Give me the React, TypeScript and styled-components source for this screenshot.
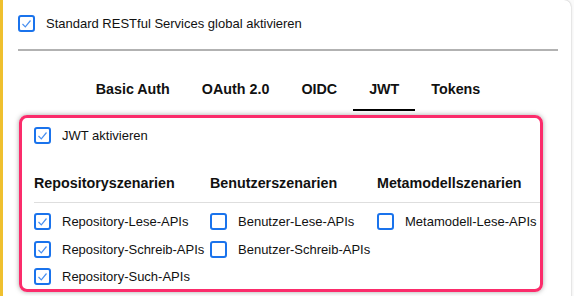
import styled, { createGlobalStyle } from 'styled-components'

const GlobalStyle = createGlobalStyle`
  body {
    margin: 0;
    background: #fafafa;
    font-family: 'Liberation Sans', Arial, sans-serif;
    color: #111;
    overflow: hidden;
  }
`

const Check = ({ checked }: { checked: boolean }) => (
  <Box>
    {checked && (
      <svg width="13" height="13" viewBox="0 0 13 13">
        <polyline points="2.5,7 5.3,9.8 10.5,3.5" fill="none" stroke="#4a90f0" strokeWidth="1.2" />
      </svg>
    )}
  </Box>
)

const Option = ({ checked, label }: { checked: boolean; label: string }) => (
  <OptionRow>
    <Check checked={checked} />
    <span>{label}</span>
  </OptionRow>
)

const tabs = ['Basic Auth', 'OAuth 2.0', 'OIDC', 'JWT', 'Tokens']

const columns = [
  {
    title: 'Repositoryszenarien',
    items: [
      { label: 'Repository-Lese-APIs', checked: true },
      { label: 'Repository-Schreib-APIs', checked: true },
      { label: 'Repository-Such-APIs', checked: true },
    ],
  },
  {
    title: 'Benutzerszenarien',
    items: [
      { label: 'Benutzer-Lese-APIs', checked: false },
      { label: 'Benutzer-Schreib-APIs', checked: false },
    ],
  },
  {
    title: 'Metamodellszenarien',
    items: [{ label: 'Metamodell-Lese-APIs', checked: false }],
  },
]

const App = () => {
  return (
    <>
      <GlobalStyle />
      <Card>
        <TopRow>
          <Check checked />
          <span>Standard RESTful Services global aktivieren</span>
        </TopRow>
        <Divider />

        {/* Tabs */}
        <Tabs>
          {tabs.map((t) => (
            <Tab key={t} $active={t === 'JWT'}>{t}</Tab>
          ))}
        </Tabs>

        {/* JWT panel */}
        <Highlight>
          <JwtRow>
            <Check checked />
            <span>JWT aktivieren</span>
          </JwtRow>
          <Scenarios>
            {columns.map((c) => (
              <Heading key={c.title}>{c.title}</Heading>
            ))}
            {[0, 1, 2].map((row) =>
              columns.map((c) => (
                <Cell key={c.title + row}>
                  {c.items[row] && <Option checked={c.items[row].checked} label={c.items[row].label} />}
                </Cell>
              ))
            )}
          </Scenarios>
        </Highlight>
      </Card>
    </>
  )
}

const Card = styled.div`
  margin-right: 3px;
  height: 300px;
  box-sizing: border-box;
  background: #fff;
  border-left: 3px solid #efc02f;
  border-radius: 0 7px 0 0;
  box-shadow: 0 0 2px rgba(0, 0, 0, 0.3);
  padding: 15px 13px 0 15px;
  font-size: 13px;
`

const TopRow = styled.div`
  display: flex;
  align-items: center;
  gap: 11px;
  height: 17px;
`

const Box = styled.span`
  flex: none;
  box-sizing: border-box;
  width: 17px;
  height: 17px;
  border: 2px solid #1a73ec;
  border-radius: 3px;
  background: #fff;
  display: flex;
  align-items: center;
  justify-content: center;
`

const Divider = styled.div`
  height: 2px;
  background: #b2b2b2;
  margin-top: 17px;
`

const Tabs = styled.div`
  display: flex;
  justify-content: center;
  margin-top: 18px;
`

const Tab = styled.div<{ $active?: boolean }>`
  padding: 10px 16px 10px;
  line-height: 20px;
  font-size: 14.3px;
  font-weight: 700;
  border-bottom: 2px solid ${(p) => (p.$active ? '#000' : 'transparent')};
`

const Highlight = styled.div`
  box-sizing: border-box;
  width: 524px;
  margin: 4px 0 0 1px;
  border: 3px solid #fb2c6b;
  border-radius: 8px;
  box-shadow: 0 0 5px rgba(0, 0, 0, 0.35);
  padding: 9px 0 0 12px;
  height: 177px;
`

const JwtRow = styled.div`
  display: flex;
  align-items: center;
  gap: 11px;
  height: 17px;
`

const Scenarios = styled.div`
  display: grid;
  grid-template-columns: 176px 167px 1fr;
  grid-template-rows: auto repeat(3, 27.5px);
  margin-top: 29px;
`

const Heading = styled.div`
  font-size: 14.3px;
  font-weight: 700;
  line-height: 20px;
  padding-bottom: 9px;
  border-bottom: 1px solid #dedede;
  margin-bottom: 5px;
  white-space: nowrap;
`

const Cell = styled.div`
  display: flex;
  align-items: center;
`

const OptionRow = styled.div`
  display: flex;
  align-items: center;
  gap: 11px;
  white-space: nowrap;
`

export default App
